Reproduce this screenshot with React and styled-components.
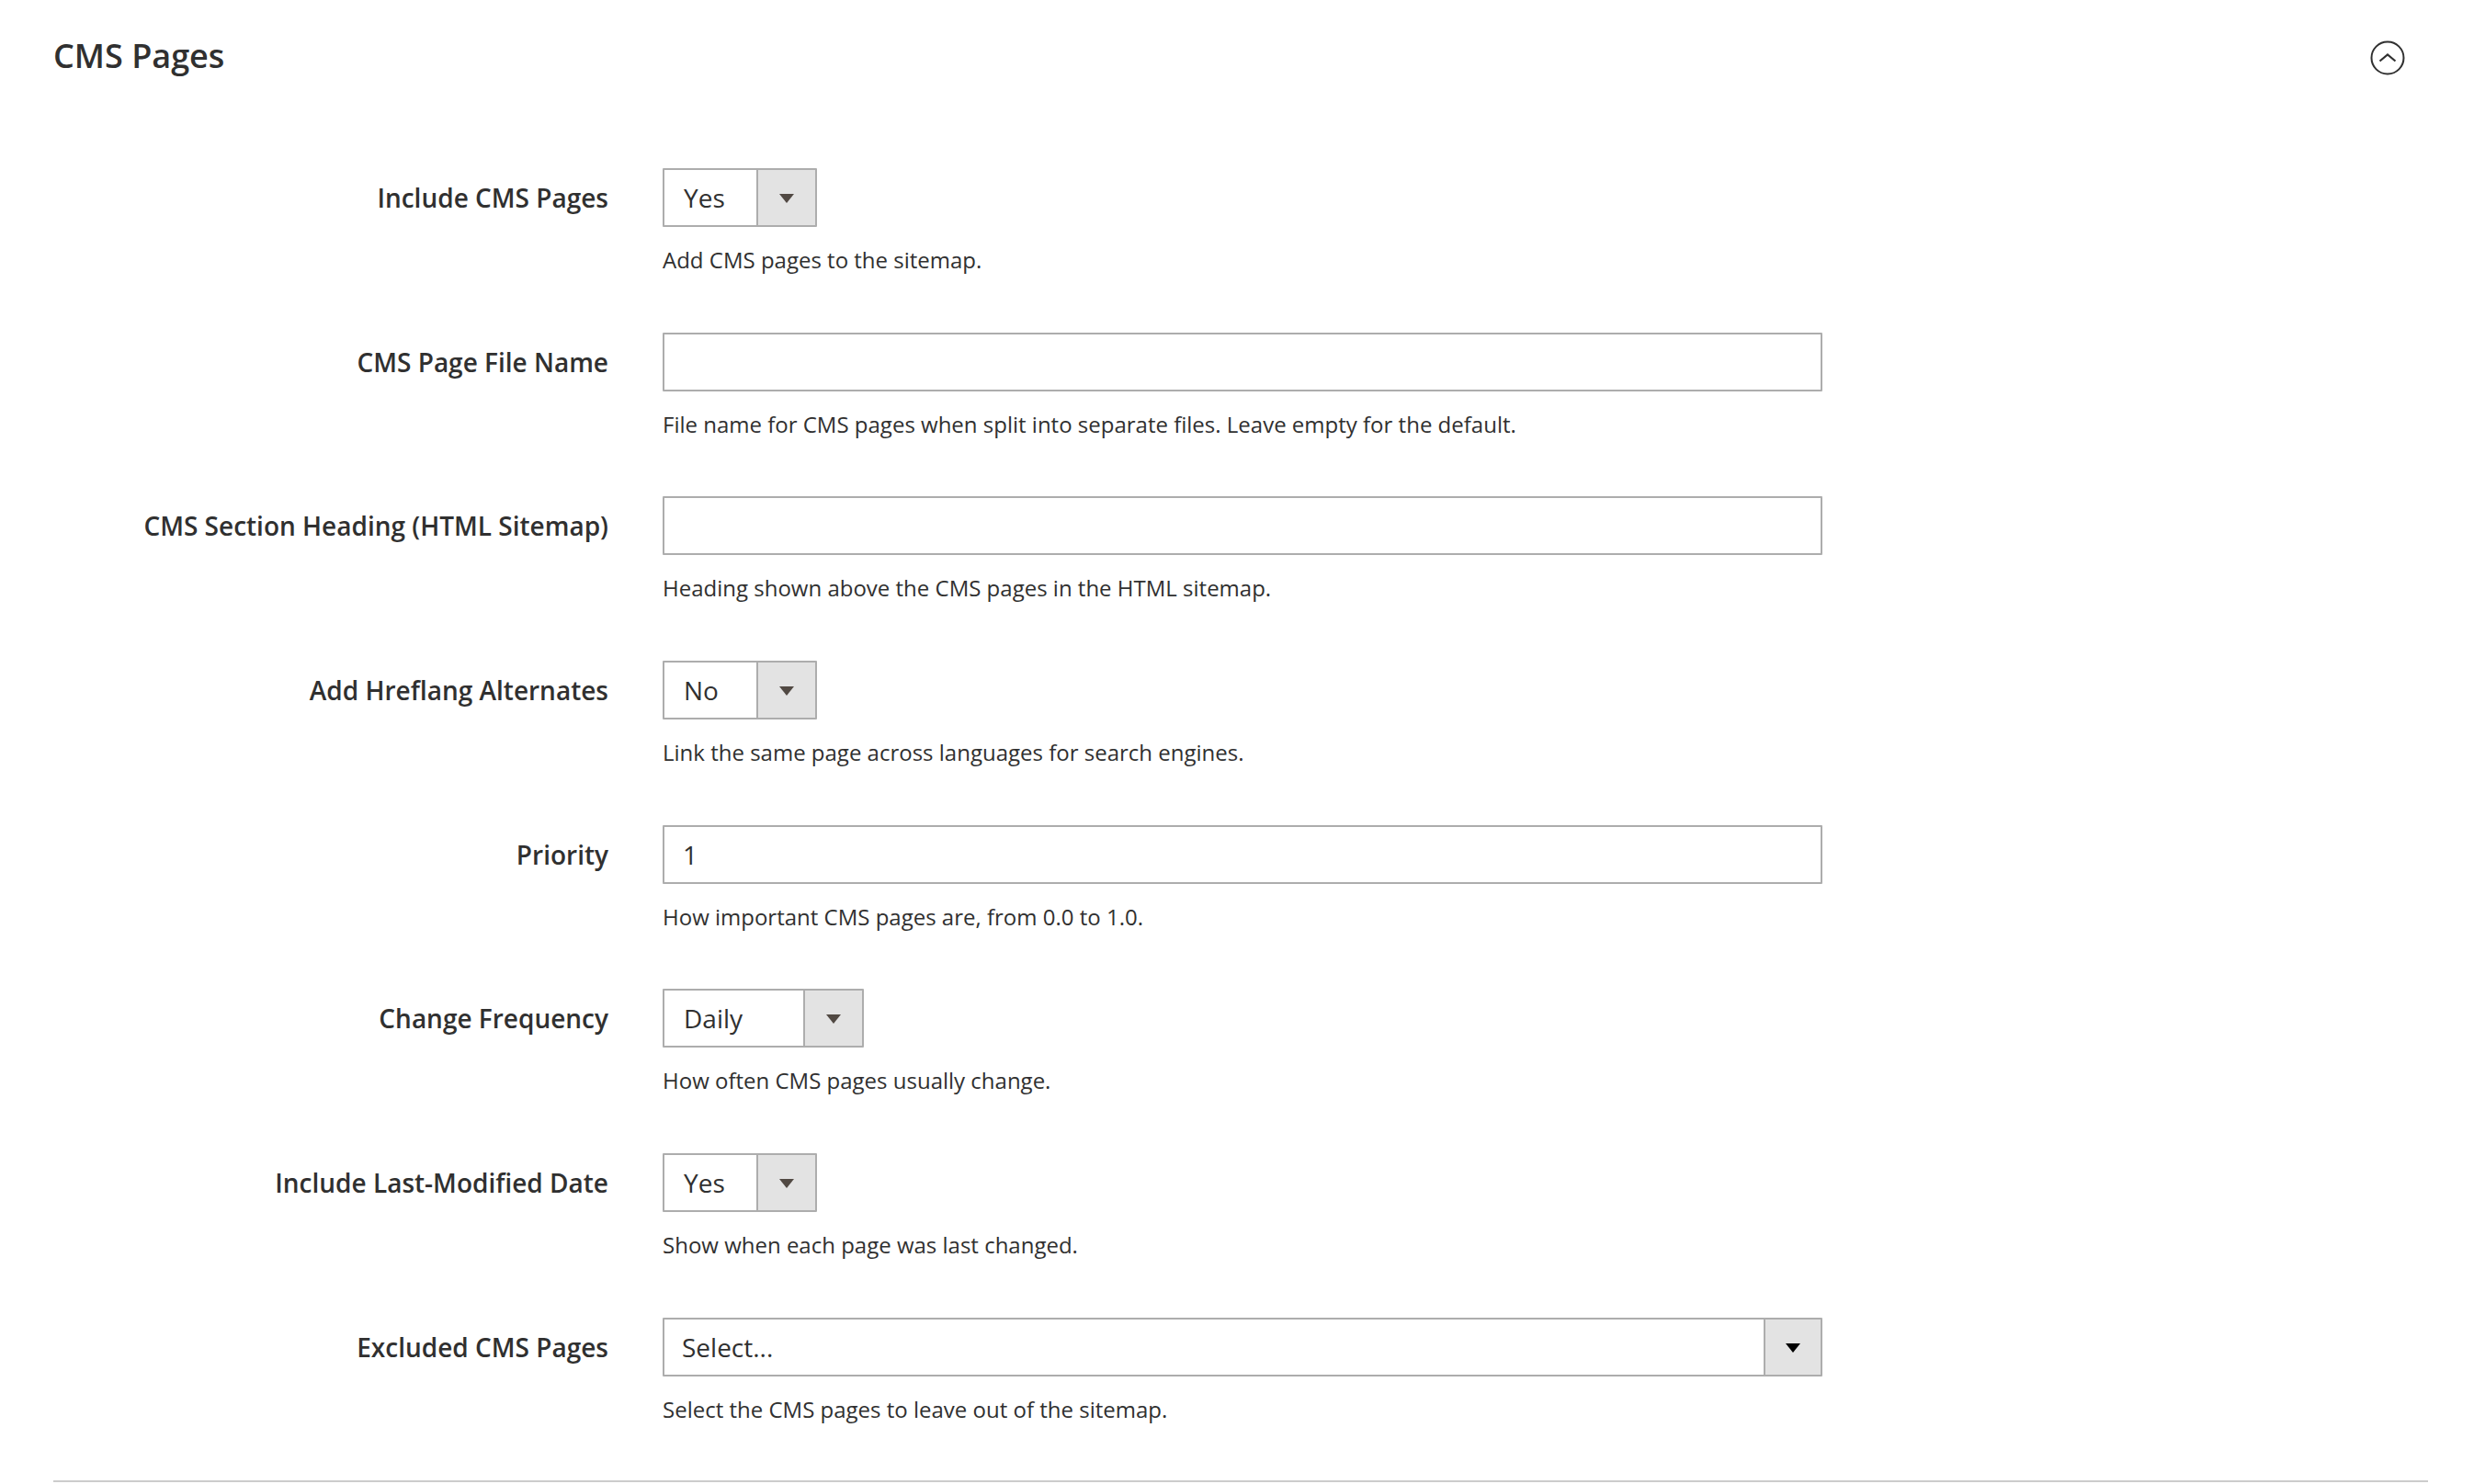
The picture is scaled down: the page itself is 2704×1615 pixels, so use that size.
import React from "react";
import styled, { createGlobalStyle } from "styled-components";

const fields = [
  { label: "Include CMS Pages", type: "select", value: "Yes", width: 168, note: "Add CMS pages to the sitemap." },
  { label: "CMS Page File Name", type: "text", value: "", note: "File name for CMS pages when split into separate files. Leave empty for the default." },
  { label: "CMS Section Heading (HTML Sitemap)", type: "text", value: "", note: "Heading shown above the CMS pages in the HTML sitemap." },
  { label: "Add Hreflang Alternates", type: "select", value: "No", width: 168, note: "Link the same page across languages for search engines." },
  { label: "Priority", type: "text", value: "1", note: "How important CMS pages are, from 0.0 to 1.0." },
  { label: "Change Frequency", type: "select", value: "Daily", width: 219, note: "How often CMS pages usually change." },
  { label: "Include Last-Modified Date", type: "select", value: "Yes", width: 168, note: "Show when each page was last changed." },
  { label: "Excluded CMS Pages", type: "multi", value: "Select...", note: "Select the CMS pages to leave out of the sitemap." },
];

export default function App() {
  return (
    <>
      <GlobalStyle />
      <Section>
        <Header>
          <Title>CMS Pages</Title>
          <CollapseButton aria-label="collapse">
            <svg width="38" height="38" viewBox="0 0 38 38" fill="none">
              <circle cx="19" cy="19" r="17.5" stroke="#303030" strokeWidth="2" />
              <path d="M10.5 22.5 L19 15.5 L27.5 22.5" stroke="#303030" strokeWidth="2.2" strokeLinejoin="miter" />
            </svg>
          </CollapseButton>
        </Header>
        <FieldList>
          {fields.map((f) => (
            <Field key={f.label}>
              <Label>{f.label}</Label>
              <ControlCol>
                {f.type === "text" && <TextInput defaultValue={f.value} />}
                {f.type === "select" && (
                  <Select $width={f.width}>
                    <SelectValue>{f.value}</SelectValue>
                    <ArrowBox>
                      <Arrow />
                    </ArrowBox>
                  </Select>
                )}
                {f.type === "multi" && (
                  <Select $width={1262}>
                    <SelectValue $tight>{f.value}</SelectValue>
                    <ArrowBox $narrow>
                      <Arrow $dark />
                    </ArrowBox>
                  </Select>
                )}
                <Note>{f.note}</Note>
              </ControlCol>
            </Field>
          ))}
        </FieldList>
      </Section>
    </>
  );
}

const GlobalStyle = createGlobalStyle`
  body {
    margin: 0;
    background: #fff;
    color: #303030;
    font-family: "Open Sans", "Liberation Sans", sans-serif;
  }
`;

const Section = styled.div`
  padding: 0 62px 0 58px;
`;

const Header = styled.div`
  height: 124px;
  display: flex;
  align-items: center;
  justify-content: space-between;
`;

const Title = styled.div`
  font-size: 36px;
  font-weight: 600;
  color: #303030;
  margin-top: -4px;
`;

const CollapseButton = styled.div`
  width: 38px;
  height: 38px;
  margin-right: 25px;
  margin-top: 2px;
  display: flex;
  align-items: center;
  justify-content: center;
`;

const FieldList = styled.div`
  display: flex;
  flex-direction: column;
  gap: 60.7px;
  padding: 59px 0 59px;
  border-bottom: 2px solid #cccccc;
`;

const Field = styled.div`
  display: grid;
  grid-template-columns: 604px 1262px;
  column-gap: 59px;
`;

const Label = styled.div`
  text-align: right;
  font-size: 28px;
  font-weight: 600;
  line-height: 64px;
  color: #303030;
`;

const ControlCol = styled.div`
  display: flex;
  flex-direction: column;
  align-items: flex-start;
`;

const TextInput = styled.input`
  box-sizing: border-box;
  width: 1262px;
  height: 64px;
  border: 2px solid #adadad;
  border-radius: 1px;
  padding: 0 20px;
  font-family: "Open Sans", "Liberation Sans", sans-serif;
  font-size: 28px;
  color: #303030;
  outline: none;
`;

const Select = styled.div`
  box-sizing: border-box;
  width: ${(p) => p.$width}px;
  height: 64px;
  border: 2px solid #adadad;
  border-radius: 1px;
  display: flex;
`;

const SelectValue = styled.div`
  flex: 1;
  padding-left: ${(p) => (p.$tight ? 19 : 21)}px;
  font-size: 28px;
  line-height: 60px;
  color: #303030;
`;

const ArrowBox = styled.div`
  width: ${(p) => (p.$narrow ? 60 : 62)}px;
  border-left: 2px solid #adadad;
  background: #e3e3e3;
  display: flex;
  align-items: center;
  justify-content: center;
`;

const Arrow = styled.div`
  width: 0;
  height: 0;
  border-left: 8px solid transparent;
  border-right: 8px solid transparent;
  border-top: 10px solid ${(p) => (p.$dark ? "#000" : "#514943")};
  margin-top: 2px;
`;

const Note = styled.div`
  margin-top: 18px;
  font-size: 24px;
  line-height: 36px;
  color: #303030;
`;
